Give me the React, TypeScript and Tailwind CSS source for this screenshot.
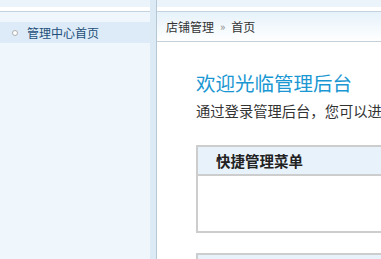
export default function App() {
  const font = { fontFamily: '"Noto Sans CJK SC", "Liberation Sans", sans-serif' };
  return (
    <div className="w-[381px] h-[259px] overflow-hidden flex bg-white" style={font}>
      {/* Sidebar */}
      <div className="w-[150px] shrink-0 flex flex-col bg-[#f0f7fc]">
        <div className="h-[7px] shrink-0 bg-[#eaf4fa]" />
        <div className="h-[4px] shrink-0 bg-white border-b border-[#c3d3df] box-content" />
        <div className="h-[10px] shrink-0" />
        <div className="h-[21px] shrink-0 bg-[#dcebf7] flex items-center pl-[12px]">
          <span className="w-[6px] h-[6px] rounded-full border border-[#b0b0b0] bg-white" />
          <span className="ml-[9px] text-[12px] leading-none text-[#1e4f7a]">管理中心首页</span>
        </div>
      </div>
      {/* Divider */}
      <div className="w-[6px] shrink-0 bg-[#dbeaf5]" />
      <div className="w-px shrink-0 bg-[#b7c8d5]" />
      {/* Main */}
      <div className="flex-1 flex flex-col min-w-0">
        <div className="h-[7px] shrink-0 bg-[#eaf4fa]" />
        <div className="h-[4px] shrink-0 bg-white border-b border-[#c3d3df] box-content" />
        <div className="h-[30px] shrink-0 bg-gradient-to-b from-[#e6f2fa] to-white border-b border-[#c5d1da] flex items-center pl-[9px] text-[12px] text-[#333] whitespace-nowrap">
          <span>店铺管理</span>
          <span className="mx-[6px] text-[#888] text-[11px]">»</span>
          <span>首页</span>
        </div>
        <div className="pl-[39px] w-[420px] shrink-0">
          <div className="mt-[29px] text-[19.5px] leading-[24px] text-[#1a97d2] whitespace-nowrap">欢迎光临管理后台</div>
          <div className="mt-[7px] text-[14.3px] leading-[18px] text-[#333] whitespace-nowrap">通过登录管理后台，您可以进行商品管理、订单管理等操作</div>
          <div className="mt-[25px] border-2 border-[#cdcdcd] h-[88px]">
            <div className="h-[27px] bg-[#e8f2fb] border-b-2 border-[#cdcdcd] box-content flex items-center pl-[18px] text-[14.5px] font-bold text-[#222]">快捷管理菜单</div>
          </div>
          <div className="mt-[20px] border-2 border-[#cdcdcd] h-[60px]">
            <div className="h-[27px] bg-[#e8f2fb]" />
          </div>
        </div>
      </div>
    </div>
  );
}
